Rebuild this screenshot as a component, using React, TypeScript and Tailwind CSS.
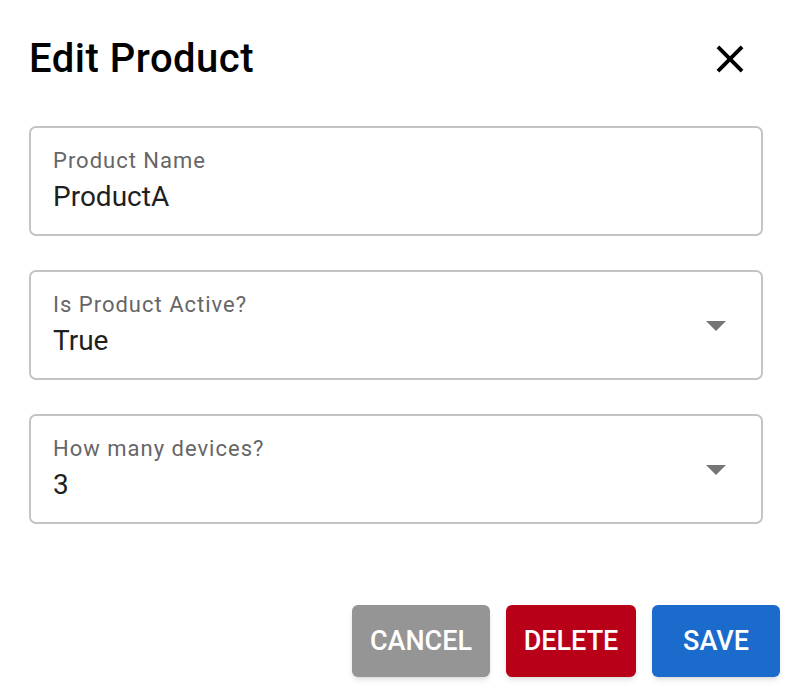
import React from "react";

const Field = ({ label, value, select }: { label: string; value: string; select?: boolean }) => (
  <div className="h-[110px] rounded-[7px] border-2 border-[#c4c4c4] pl-[22px] pr-[35px] pt-[21px] flex items-start justify-between">
    <div className="flex flex-col">
      <span className="text-[22px] leading-[24px] tracking-[1px] text-[#666666]">{label}</span>
      <span className="mt-[8px] text-[28px] leading-[32px] text-[#1f1f1f]">{value}</span>
    </div>
    {select && (
      <div className="self-center">
        <svg width="20" height="10" viewBox="0 0 20 10" className="-translate-y-[10px]">
          <polygon points="0,0 20,0 10,10" fill="#757575" />
        </svg>
      </div>
    )}
  </div>
);

export default function App() {
  return (
    <div className="min-h-[692px] w-[796px] bg-white font-['Roboto',sans-serif]">
      <div className="pl-[29px] pr-[33px] pt-[36px]">
        <div className="flex items-center justify-between">
          <h2 className="text-[40px] leading-[44px] tracking-[0.5px] font-medium text-black">Edit Product</h2>
          <svg width="46" height="46" viewBox="0 0 24 24" className="mr-[10px]">
            <path
              fill="#000"
              d="M19 6.41 17.59 5 12 10.59 6.41 5 5 6.41 10.59 12 5 17.59 6.41 19 12 13.41 17.59 19 19 17.59 13.41 12z"
            />
          </svg>
        </div>

        <div className="mt-[44px] flex flex-col gap-[34px]">
          <Field label="Product Name" value="ProductA" />
          <Field label="Is Product Active?" value="True" select />
          <Field label="How many devices?" value="3" select />
        </div>
      </div>

      <div className="mt-[81px] pr-[16px] flex justify-end gap-[16px]">
        <button className="w-[138px] h-[72px] rounded-[6px] bg-[#959595] text-white text-[27px] font-medium uppercase shadow-md">
          Cancel
        </button>
        <button className="w-[130px] h-[72px] rounded-[6px] bg-[#b80018] text-white text-[27px] font-medium uppercase shadow-md">
          Delete
        </button>
        <button className="w-[128px] h-[72px] rounded-[6px] bg-[#1a6bcc] text-white text-[27px] font-medium uppercase shadow-md">
          Save
        </button>
      </div>
    </div>
  );
}
